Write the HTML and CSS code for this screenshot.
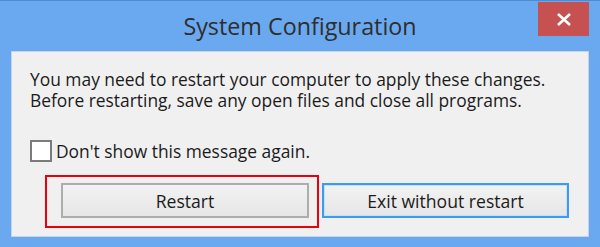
FILE: index.html
```html
<!DOCTYPE html>
<html lang="en">
<head>
<meta charset="utf-8">
<link rel="stylesheet" href="styles.css">
</head>
<body>
<div class="window">
  <div class="titlebar">
    <div class="title">System Configuration</div>
    <div class="close">
      <svg width="16" height="13" viewBox="0 0 16 13"><path d="M2 1 L14 12 M14 1 L2 12" stroke="#fff" stroke-width="2.6" stroke-linecap="butt"/></svg>
    </div>
  </div>
  <div class="panel">
    <p class="msg">You may need to restart your computer to apply these changes.<br>Before restarting, save any open files and close all programs.</p>
    <label class="check"><span class="box"></span><span class="label">Don't show this message again.</span></label>
    <div class="buttons">
      <div class="highlight"></div>
      <button class="btn">Restart</button>
      <button class="btn default">Exit without restart</button>
    </div>
  </div>
</div>
</body>
</html>
```
FILE: styles.css
```css
html, body {
  margin: 0;
  padding: 0;
  width: 600px;
  height: 247px;
  overflow: hidden;
}
body {
  background: #6aa9f0;
  font-family: "Open Sans", "Noto Sans", sans-serif;
  color: #1b1b1b;
}
.window {
  width: 600px;
  height: 247px;
  box-sizing: border-box;
  border-top: 1px solid #4f8ad3;
  position: relative;
}
.titlebar {
  height: 50px;
  display: flex;
  justify-content: center;
  position: relative;
}
.title {
  font-size: 23.3px;
  color: #2e2e2e;
  line-height: 28px;
  padding-top: 11px;
  white-space: nowrap;
}
.close {
  position: absolute;
  top: 1px;
  right: 11px;
  width: 51px;
  height: 34px;
  background: #c75050;
  display: flex;
  align-items: center;
  justify-content: center;
}
.panel {
  margin: 0 11px;
  height: 186px;
  box-sizing: border-box;
  background: #f0f0f0;
  border: 1px solid #c6d3e4;
  padding: 17px 0 0 18px;
}
.msg {
  margin: 0;
  font-size: 17.4px;
  line-height: 21px;
  white-space: nowrap;
}
.check {
  display: flex;
  align-items: center;
  margin-top: 29px;
  height: 22px;
}
.box {
  width: 18px;
  height: 18px;
  border: 2px solid #7b7b7b;
  background: #fff;
}
.label {
  font-size: 17.4px;
  margin-left: 4px;
  white-space: nowrap;
}
.buttons {
  position: relative;
  display: flex;
  gap: 13px;
  margin-top: 21px;
  margin-left: 31px;
}
.btn {
  font-family: "Open Sans", "Noto Sans", sans-serif;
  font-size: 17.6px;
  color: #1b1b1b;
  height: 35px;
  width: 248px;
  box-sizing: border-box;
  border: 2px solid #adadad;
  background: linear-gradient(#f2f2f2, #e6e6e6);
  padding: 0;
}
.btn.default {
  width: 247px;
  border-color: #3c9af0;
  box-shadow: inset 0 0 0 1px #c4e0fb;
}
.highlight {
  position: absolute;
  left: -16px;
  top: -8px;
  width: 270px;
  height: 49px;
  border: 2px solid #e8000c;
}
```
